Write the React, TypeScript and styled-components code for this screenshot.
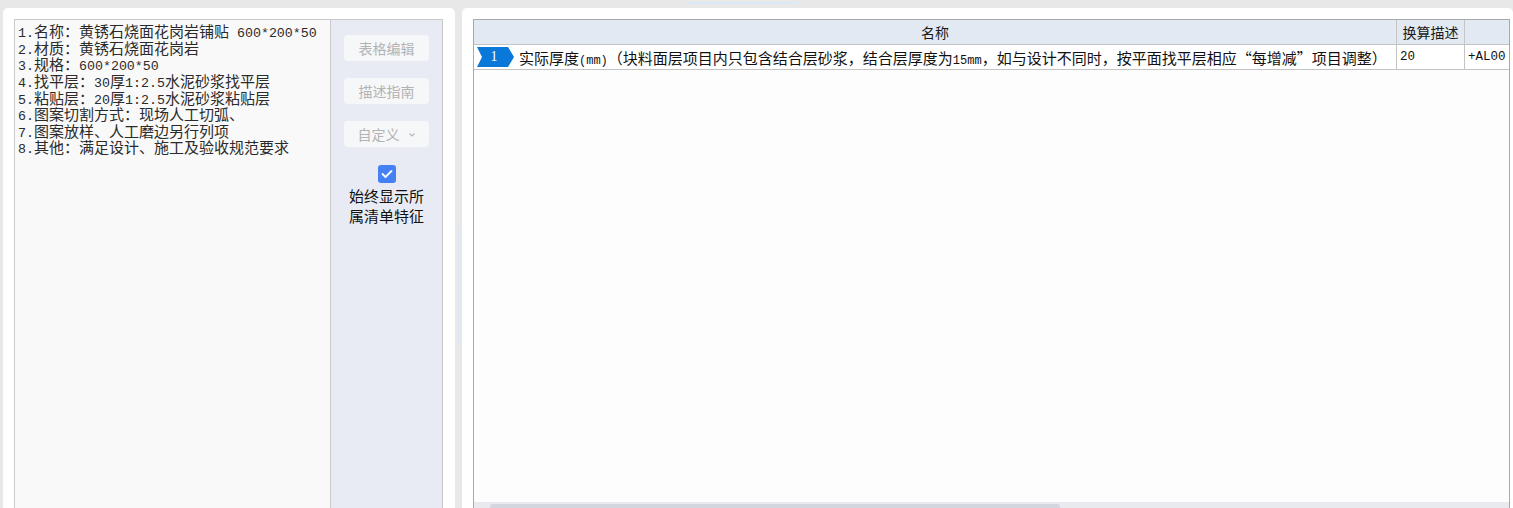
import React from "react";
import styled, { createGlobalStyle } from "styled-components";

const Global = createGlobalStyle`
  html, body { margin: 0; padding: 0; background: #e8e8e8; overflow: hidden; }
  #root { height: 508px; }
`;

const CJK = `"Noto Sans CJK SC", "Noto Sans", sans-serif`;

const Page = styled.div`
  height: 508px;
  display: flex;
  gap: 7px;
  padding: 8px 0 0 3px;
  box-sizing: border-box;
  overflow: hidden;
  position: relative;
`;

const TopHandle = styled.div`
  position: absolute;
  left: 688px;
  top: 2px;
  width: 110px;
  height: 2px;
  background: #dbe8f7;
`;

const SideHandle = styled.div`
  position: absolute;
  left: 457px;
  top: 227px;
  width: 2px;
  height: 116px;
  background: #dbe8f7;
`;

const Card = styled.div<{ $w?: number }>`
  background: #ffffff;
  border-radius: 5px 5px 0 0;
  ${(p) => (p.$w ? `width: ${p.$w}px; flex: none;` : `flex: 1; min-width: 0;`)}
  height: 520px;
  box-sizing: border-box;
  padding: 11px 12px 0 11px;
  overflow: hidden;
  display: flex;
`;

const RightCard = styled(Card)`
  padding: 11px 3px 0 11px;
`;

const Editor = styled.div`
  width: 317px;
  height: 100%;
  box-sizing: border-box;
  background: #f9f9f9;
  border: 1px solid #c9c9c9;
  padding: 3px 3px;
  font-family: ${CJK};
  font-size: 15px;
  color: #2b2b2b;
  white-space: pre;
`;

const Latin = styled.span<{ $size: number }>`
  font-family: "Liberation Mono", monospace;
  font-size: ${(p) => p.$size}px;
  line-height: 1;
`;

const Line = styled.div`
  height: 16.65px;
  line-height: 16.65px;
`;

const SidePanel = styled.div`
  width: 112px;
  height: 100%;
  box-sizing: border-box;
  background: #e8ebf4;
  border: 1px solid #c9c9c9;
  border-left: none;
  display: flex;
  flex-direction: column;
  align-items: center;
  padding-top: 15px;
`;

const SideButton = styled.div<{ $gap: number }>`
  width: 85px;
  height: 26px;
  margin-bottom: ${(p) => p.$gap}px;
  border-radius: 4px;
  background: #f6f7f9;
  color: #b3b3b3;
  font-family: ${CJK};
  font-size: 14px;
  display: flex;
  align-items: center;
  justify-content: center;
  gap: 8px;
`;

const Chevron = styled.svg`
  width: 8px;
  height: 8px;
  margin-top: 1px;
`;

const Check = styled.div`
  width: 18px;
  height: 18px;
  border-radius: 3px;
  background: #4381f4;
  display: flex;
  align-items: center;
  justify-content: center;
`;

const CheckLabel = styled.div`
  margin-top: 3px;
  font-family: ${CJK};
  font-size: 15px;
  line-height: 20px;
  color: #111;
  text-align: center;
`;

const TableBox = styled.div`
  flex: 1;
  height: 495px;
  box-sizing: border-box;
  border: 1px solid #a9a9a9;
  border-bottom: none;
  display: flex;
  flex-direction: column;
  background: #fdfdfd;
`;

const Grid = styled.div`
  display: grid;
  grid-template-columns: 923px 68px 1fr;
  grid-auto-rows: 25px;
`;

const HeadCell = styled.div<{ $last?: boolean }>`
  background: #e3e9f2;
  border-right: ${(p) => (p.$last ? "none" : "1px solid #c4c4c4")};
  border-bottom: 1px solid #c4c4c4;
  font-family: ${CJK};
  font-size: 14px;
  color: #1a1a1a;
  display: flex;
  align-items: center;
  justify-content: center;
`;

const Cell = styled.div<{ $last?: boolean }>`
  background: #fff;
  border-right: ${(p) => (p.$last ? "none" : "1px solid #c4c4c4")};
  border-bottom: 1px solid #c4c4c4;
  font-family: ${CJK};
  font-size: 15px;
  color: #111;
  display: flex;
  align-items: center;
  padding-left: 3px;
  white-space: nowrap;
  overflow: hidden;
`;

const NameCell = styled(Cell)`
  padding-left: 3px;
  gap: 5px;
`;

const Badge = styled.div`
  position: relative;
  width: 37px;
  height: 20px;
  flex: none;
  display: flex;
  align-items: center;
  justify-content: center;
  color: #fff;
  font-family: "Liberation Serif", serif;
  font-size: 14px;
`;

const BadgeShape = styled.svg`
  position: absolute;
  inset: 0;
`;

const BadgeNum = styled.span`
  position: relative;
  margin-left: -3px;
`;

const Spacer = styled.div`
  flex: 1;
`;

const Scrollbar = styled.div`
  height: 12px;
  flex: none;
  background: #e9eaf0;
  display: flex;
  align-items: flex-start;
  padding-left: 16px;
`;

const Thumb = styled.div`
  width: 570px;
  height: 7px;
  margin-top: 2px;
  border-radius: 3px;
  background: #d3d6de;
`;

const mixed = (text: string, size: number) =>
  text.split(/([\x20-\x7E]+)/).map((part, i) =>
    /^[\x20-\x7E]+$/.test(part) ? (
      <Latin key={i} $size={size}>
        {part}
      </Latin>
    ) : (
      <React.Fragment key={i}>{part}</React.Fragment>
    )
  );

const lines = [
  "1.名称：黄锈石烧面花岗岩铺贴 600*200*50",
  "2.材质：黄锈石烧面花岗岩",
  "3.规格：600*200*50",
  "4.找平层：30厚1:2.5水泥砂浆找平层",
  "5.粘贴层：20厚1:2.5水泥砂浆粘贴层",
  "6.图案切割方式：现场人工切弧、",
  "7.图案放样、人工磨边另行列项",
  "8.其他：满足设计、施工及验收规范要求",
];

export default function App() {
  return (
    <>
      <Global />
      <Page>
        <TopHandle />
        <SideHandle />
        <Card $w={452}>
          <Editor>
            {lines.map((l, i) => (
              <Line key={i}>{mixed(l, 13.3)}</Line>
            ))}
          </Editor>
          <SidePanel>
            <SideButton $gap={17}>表格编辑</SideButton>
            <SideButton $gap={17}>描述指南</SideButton>
            <SideButton $gap={18}>
              自定义
              <Chevron viewBox="0 0 8 8">
                <path d="M1.5 2.5 L4 5 L6.5 2.5" fill="none" stroke="#b8b8b8" strokeWidth="1.2" />
              </Chevron>
            </SideButton>
            <Check>
              <svg width="12" height="10" viewBox="0 0 12 10">
                <path d="M1.5 5 L4.5 8 L10.5 2" fill="none" stroke="#fff" strokeWidth="1.8" strokeLinecap="round" strokeLinejoin="round" />
              </svg>
            </Check>
            <CheckLabel>
              始终显示所
              <br />
              属清单特征
            </CheckLabel>
          </SidePanel>
        </Card>
        <RightCard>
          <TableBox>
            <Grid>
              <HeadCell>名称</HeadCell>
              <HeadCell>换算描述</HeadCell>
              <HeadCell $last />
              <NameCell>
                <Badge>
                  <BadgeShape width="37" height="20" viewBox="0 0 37 20">
                    <path d="M0 0 H31 L37 10 L31 20 H0 L5 10 Z" fill="#0a78d8" />
                  </BadgeShape>
                  <BadgeNum>1</BadgeNum>
                </Badge>
                <span>
                  {mixed(
                    "实际厚度(mm)（块料面层项目内只包含结合层砂浆，结合层厚度为15mm，如与设计不同时，按平面找平层相应“每增减”项目调整）",
                    12
                  )}
                </span>
              </NameCell>
              <Cell>{mixed("20", 12.5)}</Cell>
              <Cell $last>{mixed("+AL00", 12.5)}</Cell>
            </Grid>
            <Spacer />
            <Scrollbar>
              <Thumb />
            </Scrollbar>
          </TableBox>
        </RightCard>
      </Page>
    </>
  );
}
